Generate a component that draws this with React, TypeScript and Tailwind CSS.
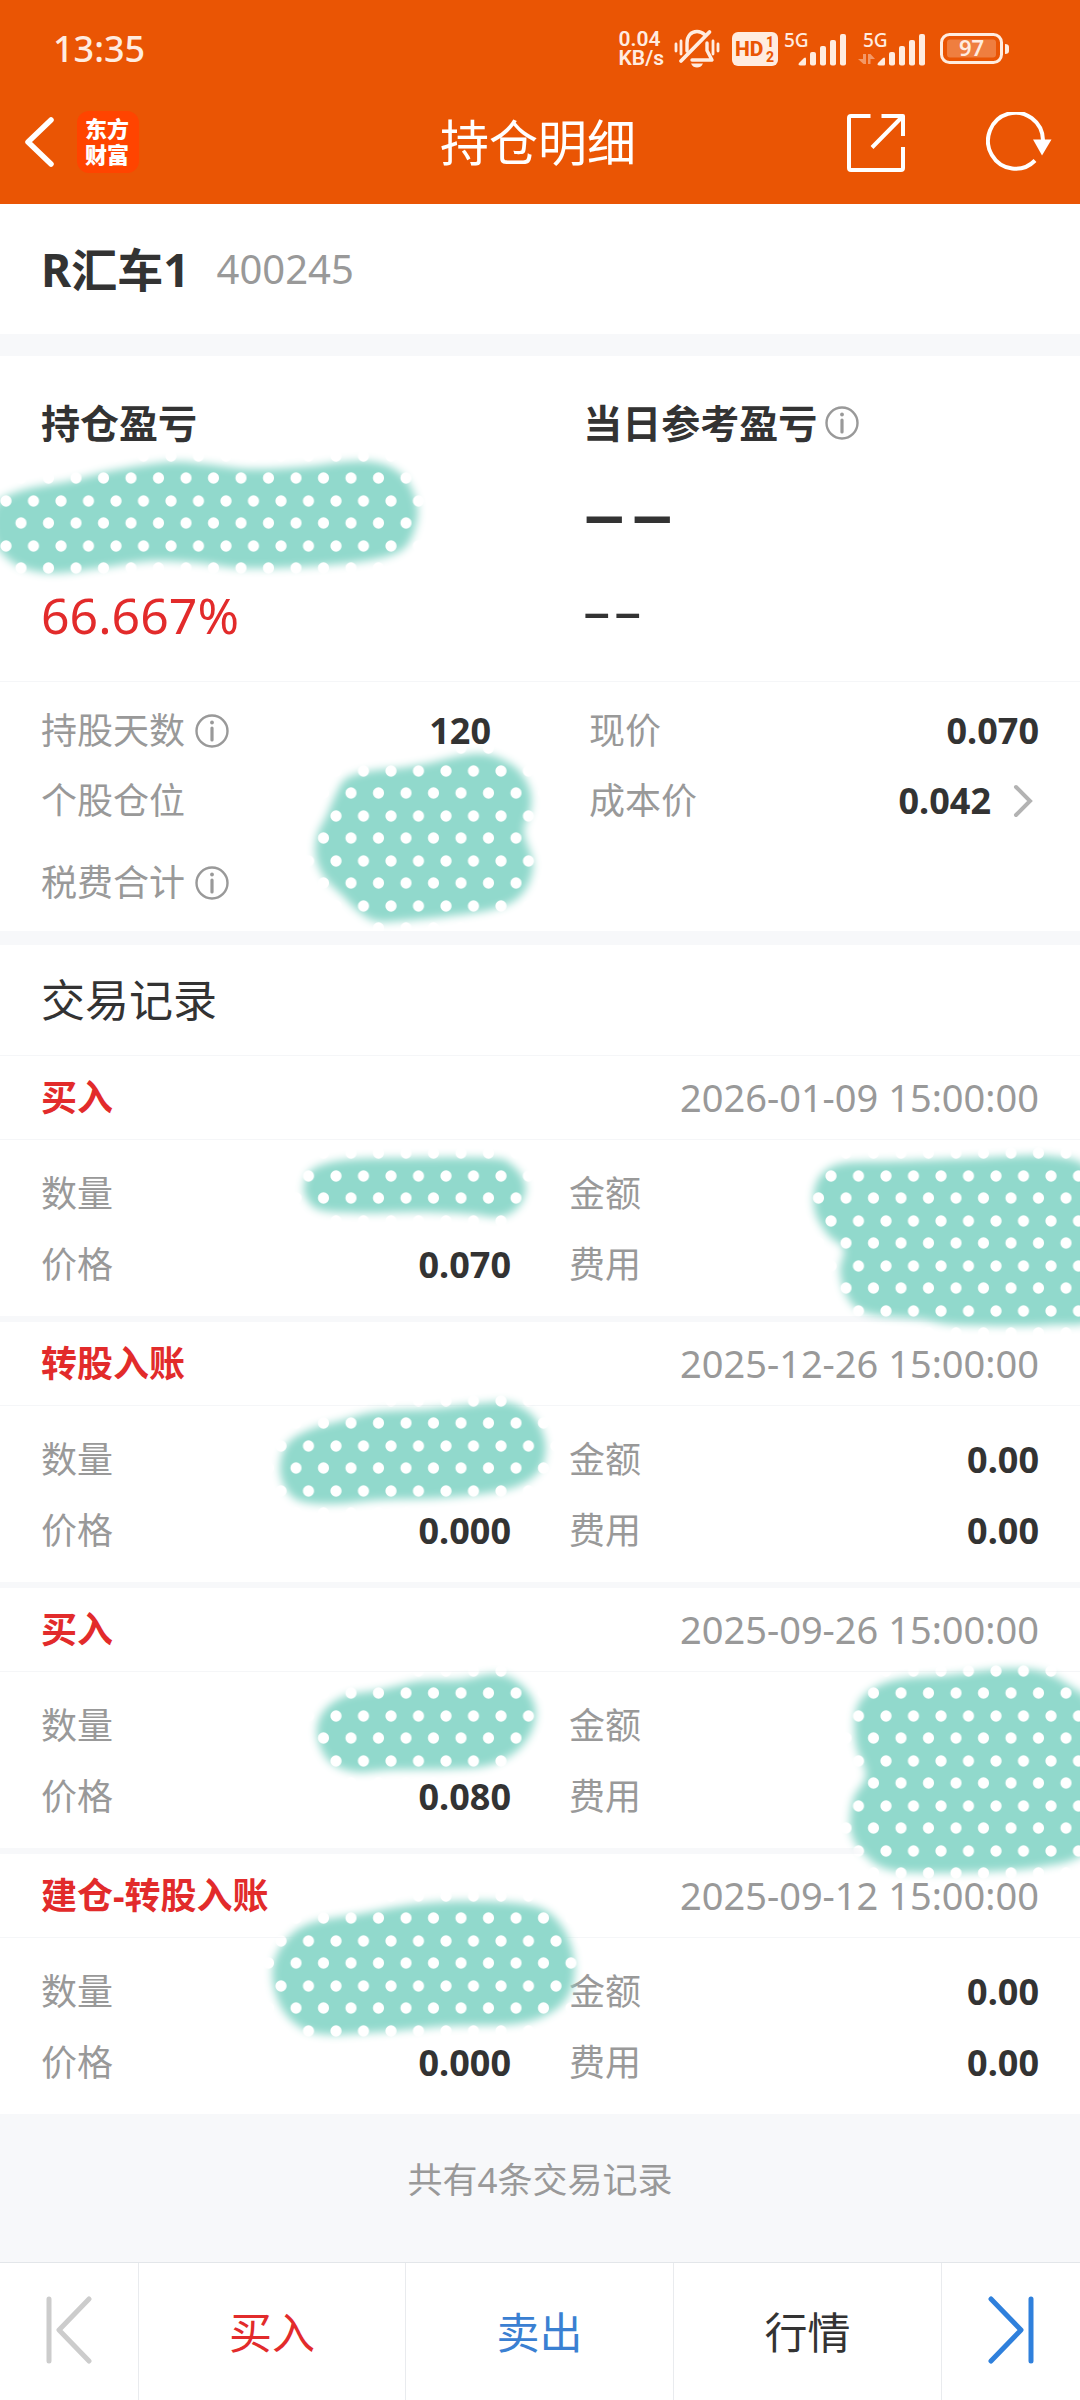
type Point = [number, number];

type TradeRecord = {
  type: string;
  time: string;
  quantity?: string;
  price: string;
  amount?: string;
  fee?: string;
};

const records: TradeRecord[] = [
  { type: "买入", time: "2026-01-09 15:00:00", price: "0.070" },
  { type: "转股入账", time: "2025-12-26 15:00:00", price: "0.000", amount: "0.00", fee: "0.00" },
  { type: "买入", time: "2025-09-26 15:00:00", price: "0.080" },
  { type: "建仓-转股入账", time: "2025-09-12 15:00:00", price: "0.000", amount: "0.00", fee: "0.00" },
];

// Outlines of the brush strokes that hide private numbers
const smudges: Point[][] = [
  [[-6, 507], [20, 491], [70, 481], [110, 471], [170, 462], [205, 464], [250, 469], [300, 467], [365, 461], [400, 473], [416, 500], [416, 525], [402, 550], [365, 561], [300, 567], [240, 568], [200, 563], [150, 561], [100, 568], [50, 573], [15, 564], [-6, 540]],
  [[347, 778], [370, 771], [400, 768], [430, 763], [465, 755], [490, 755], [515, 767], [529, 787], [531, 808], [524, 832], [533, 862], [528, 885], [514, 901], [490, 910], [450, 916], [400, 921], [375, 921], [358, 911], [342, 895], [325, 878], [316, 858], [317, 836], [327, 815], [337, 792]],
  [[304, 1186], [313, 1169], [345, 1160], [400, 1158], [490, 1158], [512, 1165], [525, 1183], [523, 1200], [511, 1213], [495, 1217], [470, 1214], [420, 1212], [360, 1213], [320, 1210], [307, 1199]],
  [[814, 1192], [823, 1173], [845, 1163], [900, 1161], [980, 1158], [1050, 1156], [1090, 1172], [1100, 1240], [1095, 1315], [1050, 1325], [960, 1325], [920, 1319], [870, 1314], [849, 1300], [840, 1272], [844, 1249], [829, 1236], [816, 1215]],
  [[280, 1466], [288, 1443], [311, 1429], [340, 1421], [375, 1412], [430, 1409], [485, 1403], [511, 1403], [533, 1416], [545, 1440], [543, 1464], [529, 1480], [500, 1491], [440, 1498], [380, 1500], [335, 1504], [300, 1501], [285, 1487]],
  [[317, 1735], [323, 1712], [345, 1696], [380, 1690], [420, 1681], [460, 1680], [495, 1674], [519, 1683], [534, 1703], [534, 1725], [519, 1749], [490, 1765], [450, 1769], [390, 1770], [355, 1772], [329, 1761]],
  [[856, 1710], [871, 1690], [900, 1679], [950, 1675], [1000, 1669], [1040, 1671], [1070, 1686], [1090, 1706], [1096, 1770], [1092, 1840], [1075, 1859], [1040, 1867], [1000, 1871], [940, 1873], [890, 1870], [866, 1856], [851, 1832], [853, 1800], [866, 1775], [856, 1745]],
  [[273, 1966], [286, 1940], [311, 1923], [360, 1914], [410, 1905], [470, 1901], [534, 1906], [561, 1925], [574, 1958], [571, 1990], [552, 2012], [515, 2024], [450, 2026], [380, 2032], [320, 2034], [291, 2020], [276, 1995]],
];

function smoothPath(points: Point[]) {
  const n = points.length;
  let d = `M${points[0][0]} ${points[0][1]}`;
  for (let i = 0; i < n; i++) {
    const p0 = points[(i - 1 + n) % n];
    const p1 = points[i];
    const p2 = points[(i + 1) % n];
    const p3 = points[(i + 2) % n];
    d += `C${p1[0] + (p2[0] - p0[0]) / 6} ${p1[1] + (p2[1] - p0[1]) / 6} ${p2[0] - (p3[0] - p1[0]) / 6} ${p2[1] - (p3[1] - p1[1]) / 6} ${p2[0]} ${p2[1]}`;
  }
  return d + "Z";
}

function Smudges() {
  return (
    <svg
      className="pointer-events-none absolute inset-0 h-full w-full"
      viewBox="0 0 1080 2400"
      preserveAspectRatio="none"
      aria-hidden="true"
    >
      <defs>
        <filter id="soft" filterUnits="userSpaceOnUse" x="-40" y="0" width="1200" height="2400">
          <feGaussianBlur stdDeviation="4" />
        </filter>
        <pattern id="dots" width="27.5" height="45" patternUnits="userSpaceOnUse">
          <rect width="27.5" height="45" fill="#91d9cc" />
          <ellipse cx="21" cy="28" rx="5.6" ry="5.8" fill="#fff" />
          <ellipse cx="6" cy="6" rx="5.6" ry="5.8" fill="#fff" />
        </pattern>
        <mask id="brush" maskUnits="userSpaceOnUse" x="0" y="0" width="1080" height="2400">
          <g filter="url(#soft)" fill="#fff">
            {smudges.map((points, i) => (
              <path key={i} d={smoothPath(points)} />
            ))}
          </g>
        </mask>
      </defs>
      <rect width="1080" height="2400" fill="url(#dots)" mask="url(#brush)" />
    </svg>
  );
}

function MutedBell() {
  return (
    <svg width="56" height="40" viewBox="0 0 56 40" fill="none" stroke="#ffece0" strokeWidth="3.4" strokeLinecap="round">
      <path d="M6 15v7M11 12v13M43 12v13M48 15v7" strokeWidth="2.8" />
      <path d="M17 22V14C17 7 21 2.500 27 2.500C30 2.500 32.500 3.500 34.500 5.500M37 14v7.500L42 31H22" strokeLinejoin="round" />
      <path d="M39.500 3L11 32" strokeWidth="3.800" />
      <path d="M21 34.500h12c-1.500 3-3.500 4-6 4s-4.500-1-6-4z" fill="#ffece0" stroke="none" />
    </svg>
  );
}

function HdBadge() {
  return (
    <svg width="46" height="34" viewBox="0 0 46 34" fontFamily="Roboto, sans-serif" fontWeight="800" fill="#ea5504">
      <rect width="46" height="34" rx="6" fill="#ffece0" />
      <text x="3" y="24" fontSize="21">HD</text>
      <text x="34" y="15" fontSize="14">1</text>
      <text x="34" y="30" fontSize="14">2</text>
    </svg>
  );
}

function Signal() {
  return (
    <svg width="63" height="46" viewBox="0 -6 63 46" fill="#ffece0">
      <text x="0" y="15" fontSize="19" fontFamily="Noto Sans, sans-serif" fontWeight="500">5G</text>
      <path d="M15 31l5-5q2-1.500 2 1v5q0 1.500-1.500 1.500h-4q-3 0-1.500-2.500z" />
      <rect x="26" y="20" width="6" height="13.500" rx="2" />
      <rect x="36" y="14" width="6" height="19.500" rx="2" />
      <rect x="46" y="8" width="6" height="25.500" rx="2" />
      <rect x="56" y="2" width="6" height="31.500" rx="2" />
    </svg>
  );
}

function DataSignal() {
  return (
    <svg width="73" height="46" viewBox="-10 -6 73 46" fill="#ffece0">
      <text x="0" y="15" fontSize="19" fontFamily="Noto Sans, sans-serif" fontWeight="500">5G</text>
      <path d="M3 22v10h-2.500L-5 27h5v-5zM5 32V22h2.500l4.500 5h-4.500v5z" opacity="0.45" />
      <path d="M15 31l5-5q2-1.500 2 1v5q0 1.500-1.500 1.500h-4q-3 0-1.500-2.500z" />
      <rect x="26" y="20" width="6" height="13.500" rx="2" />
      <rect x="36" y="14" width="6" height="19.500" rx="2" />
      <rect x="46" y="8" width="6" height="25.500" rx="2" />
      <rect x="56" y="2" width="6" height="31.500" rx="2" />
    </svg>
  );
}

function Battery() {
  return (
    <svg width="77" height="34" viewBox="0 0 77 34">
      <rect x="9.500" y="2.500" width="60" height="28" rx="8" fill="none" stroke="#ffece0" strokeWidth="3" />
      <rect x="15" y="7.500" width="49" height="18" rx="3" fill="#ffece0" opacity="0.27" />
      <path d="M73 12q4 0 4 3v4q0 3-4 3z" fill="#ffece0" />
      <text x="39.500" y="24" fontSize="22" textAnchor="middle" fontFamily="Noto Sans, sans-serif" fontWeight="600" fill="#ffece0">
        97
      </text>
    </svg>
  );
}

function StatusBar() {
  return (
    <div className="flex h-[84px] items-center justify-between pt-[14px] pr-[71px] pl-[53px] text-[#ffece0]">
      <span className="text-[36px] leading-none font-medium">13:35</span>
      <div className="flex items-center gap-1.5">
        <div className="font-[Roboto] text-[21px] leading-[19px] font-semibold">
          <div>0.04</div>
          <div>KB/s</div>
        </div>
        <MutedBell />
        <HdBadge />
        <Signal />
        <DataSignal />
        <Battery />
      </div>
    </div>
  );
}

function NavBar() {
  return (
    <div className="grid h-[120px] grid-cols-[1fr_auto_1fr] items-center pr-7 pb-1 pl-6 text-white">
      <div className="flex items-center gap-[22px]">
        <button aria-label="返回">
          <svg width="31" height="52" viewBox="0 0 31 52" fill="none" stroke="#fff" strokeWidth="5.500" strokeLinecap="round" strokeLinejoin="round">
            <path d="M27 4L4 26L27 48" />
          </svg>
        </button>
        <div className="flex h-[62px] w-[62px] flex-col justify-center rounded-xl bg-[#ff4400] pb-0.5 pl-2 text-[22px] leading-[26px] font-black">
          <span>东方</span>
          <span>财富</span>
        </div>
      </div>
      <h1 className="text-[49px] leading-none">持仓明细</h1>
      <div className="flex items-center justify-end gap-[81px]">
        <button aria-label="分享">
          <svg width="59" height="59" viewBox="0 0 59 59" fill="none" stroke="#fff" strokeWidth="4" strokeLinejoin="round">
            <path d="M24.500 3H5q-2 0-2 2v50q0 2 2 2h50q2 0 2-2V34M35.500 3H57v20M57 3L26 34.500" />
          </svg>
        </button>
        <button aria-label="刷新">
          <svg width="66" height="60" viewBox="0 0 66 60">
            <path d="M57 28A27.500 28 0 1 0 49 48.500" fill="none" stroke="#fff" strokeWidth="4" />
            <path d="M47 27.500h18.500L56 43.500z" fill="#fff" />
          </svg>
        </button>
      </div>
    </div>
  );
}

function InfoIcon() {
  return (
    <svg width="34" height="34" viewBox="0 0 34 34" fill="none" stroke="#999" strokeWidth="2.400">
      <circle cx="17" cy="17" r="15.500" />
      <path d="M17 14v12" strokeWidth="3.200" strokeLinecap="round" />
      <circle cx="17" cy="8.500" r="1.900" fill="#999" stroke="none" />
    </svg>
  );
}

function Field({ label, value, info }: { label: string; value?: string; info?: boolean }) {
  return (
    <div className="flex items-center justify-between">
      <dt className="flex items-center gap-[10px] text-[#999]">
        {label}
        {info && (
          <button aria-label={`${label}说明`}>
            <InfoIcon />
          </button>
        )}
      </dt>
      <dd className="font-bold">{value}</dd>
    </div>
  );
}

function Profit() {
  return (
    <section className="grid grid-cols-[54%_46%] border-b border-[#f5f6f8] pt-[37px] pb-[34px]">
      <div className="pl-[41px]">
        <h2 className="text-[39px] leading-[60px] font-bold">持仓盈亏</h2>
        <div className="h-[130px]" />
        <p className="text-[50px] leading-[64px] text-[#e22b2b]">66.667%</p>
      </div>
      <div>
        <h2 className="flex items-center gap-2 text-[39px] leading-[60px] font-bold">
          当日参考盈亏
          <button aria-label="当日参考盈亏说明">
            <InfoIcon />
          </button>
        </h2>
        <p className="mb-4 flex gap-1.5 text-[84px] leading-[114px]">
          <span>–</span>
          <span>–</span>
        </p>
        <p className="flex gap-1 text-[54px] leading-[54px]">
          <span>–</span>
          <span>–</span>
        </p>
      </div>
    </section>
  );
}

function Details() {
  return (
    <dl className="grid grid-cols-2 gap-x-[98px] px-[41px] pt-[14px] pb-[13px] text-[36px] leading-[70px]">
      <Field label="持股天数" value="120" info />
      <Field label="现价" value="0.070" />
      <Field label="个股仓位" />
      <div className="flex items-center justify-between">
        <dt className="text-[#999]">成本价</dt>
        <dd className="flex items-center gap-[22px] font-bold">
          0.042
          <button aria-label="成本价详情" className="pr-1.5">
            <svg width="20" height="34" viewBox="0 0 20 34" fill="none" stroke="#b3b3b3" strokeWidth="4" strokeLinecap="round">
              <path d="M3 3L17 17L3 31" />
            </svg>
          </button>
        </dd>
      </div>
      <div className="pt-3">
        <Field label="税费合计" info />
      </div>
    </dl>
  );
}

function RecordCard({ record }: { record: TradeRecord }) {
  return (
    <li className="bg-white text-[36px]">
      <div className="flex items-center justify-between border-b border-[#f5f6f8] px-[41px] leading-[83px]">
        <h3 className="font-bold text-[#e22b2b]">{record.type}</h3>
        <time className="text-[38px] text-[#999]">{record.time}</time>
      </div>
      <dl className="grid grid-cols-2 gap-x-[58px] px-[41px] pt-[18px] pb-[16px] leading-[71px]">
        <Field label="数量" value={record.quantity} />
        <Field label="金额" value={record.amount} />
        <Field label="价格" value={record.price} />
        <Field label="费用" value={record.fee} />
      </dl>
    </li>
  );
}

function BottomBar() {
  return (
    <nav className="grid h-[138px] grid-cols-[139fr_267fr_268fr_268fr_138fr] divide-x divide-[#e9ebee] border-t border-[#e3e6ea] bg-white text-[43px]">
      <button aria-label="上一只" className="flex items-center justify-center pb-1">
        <svg width="46" height="68" viewBox="0 0 46 68" fill="none" stroke="#ccc" strokeWidth="5" strokeLinecap="round" strokeLinejoin="round">
          <path d="M3 3v62M43 3L13 34L43 65" />
        </svg>
      </button>
      <button className="pt-1 text-[#e22b2b]">买入</button>
      <button className="pt-1 text-[#3a80d2]">卖出</button>
      <button className="pt-1">行情</button>
      <button aria-label="下一只" className="flex items-center justify-center pb-1">
        <svg width="46" height="68" viewBox="0 0 46 68" fill="none" stroke="#2f80dc" strokeWidth="5" strokeLinecap="round" strokeLinejoin="round">
          <path d="M43 3v62M3 3L33 34L3 65" />
        </svg>
      </button>
    </nav>
  );
}

export default function App() {
  return (
    <div className="relative flex min-h-screen flex-col overflow-hidden bg-[#f7f8fa] font-['Noto_Sans','Noto_Sans_CJK_SC',sans-serif] text-[#333]">
      <header className="bg-[#ea5504]">
        <StatusBar />
        <NavBar />
      </header>
      <main className="flex flex-1 flex-col">
        <section className="flex h-[130px] items-center gap-[27px] bg-white px-[41px]">
          <h2 className="text-[46px] leading-none font-bold">R汇车1</h2>
          <span className="text-[40px] leading-none text-[#999]">400245</span>
        </section>
        <div className="mt-[22px] bg-white">
          <Profit />
          <Details />
        </div>
        <section className="mt-[14px]">
          <h2 className="border-b border-[#f5f6f8] bg-white px-[41px] text-[44px] leading-[110px]">交易记录</h2>
          <ul className="flex flex-col gap-1.5">
            {records.map((record) => (
              <RecordCard key={record.time} record={record} />
            ))}
          </ul>
        </section>
        <p className="flex flex-1 items-center justify-center pb-4 text-[35px] text-[#999]">共有4条交易记录</p>
      </main>
      <BottomBar />
      <Smudges />
    </div>
  );
}
